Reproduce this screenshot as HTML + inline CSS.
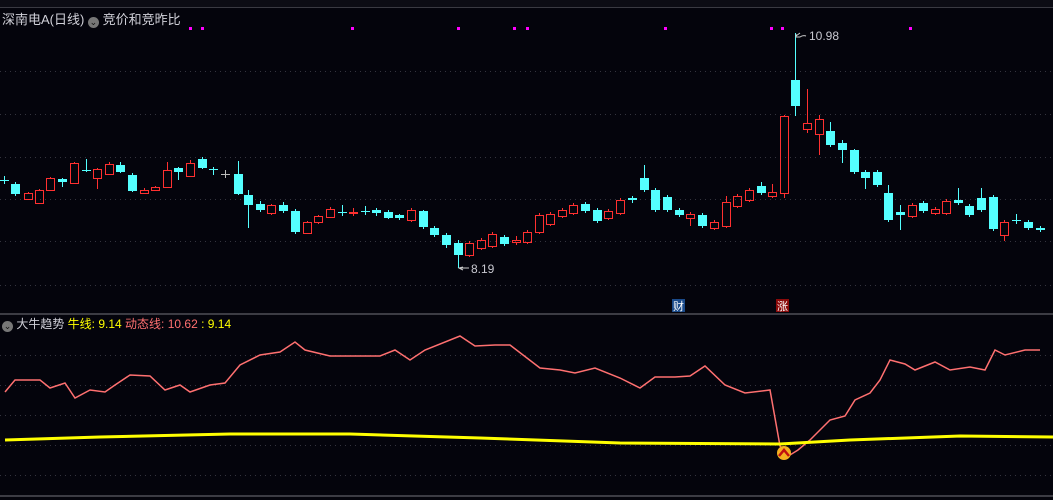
<!DOCTYPE html>
<html><head><meta charset="utf-8"><style>
html,body{margin:0;padding:0;background:#04040c;width:1053px;height:500px;overflow:hidden;font-family:"Liberation Sans","Noto Sans CJK SC",sans-serif;}
.t{position:absolute;font-size:13px;white-space:nowrap}
</style></head><body>
<svg id="s" width="1053" height="500" style="position:absolute;left:0;top:0" xmlns="http://www.w3.org/2000/svg" shape-rendering="crispEdges">
<rect width="1053" height="500" fill="#04040c"/>
<rect x="0" y="0" width="1053" height="7" fill="#0c0c14"/>
<line x1="0" y1="7.5" x2="1053" y2="7.5" stroke="#3a3a42"/>
<g stroke="#34343e" stroke-dasharray="1,4">
<line x1="0" y1="71.5" x2="1053" y2="71.5"/><line x1="0" y1="114.5" x2="1053" y2="114.5"/>
<line x1="0" y1="157.5" x2="1053" y2="157.5"/><line x1="0" y1="199.5" x2="1053" y2="199.5"/>
<line x1="0" y1="241.5" x2="1053" y2="241.5"/><line x1="0" y1="285.5" x2="1053" y2="285.5"/>
<line x1="0" y1="355.5" x2="1053" y2="355.5"/><line x1="0" y1="385.5" x2="1053" y2="385.5"/>
<line x1="0" y1="415.5" x2="1053" y2="415.5"/><line x1="0" y1="445.5" x2="1053" y2="445.5"/>
<line x1="0" y1="475.5" x2="1053" y2="475.5"/>
</g>
<line x1="0" y1="314" x2="1053" y2="314" stroke="#3c3c44" stroke-width="2"/>
<line x1="0" y1="496" x2="1053" y2="496" stroke="#3c3c44" stroke-width="2"/>
<g id="c"></g>
<g fill="#ff00ff"><rect x="189" y="27" width="3" height="3"/><rect x="201" y="27" width="3" height="3"/><rect x="351" y="27" width="3" height="3"/><rect x="457" y="27" width="3" height="3"/><rect x="513" y="27" width="3" height="3"/><rect x="526" y="27" width="3" height="3"/><rect x="664" y="27" width="3" height="3"/><rect x="770" y="27" width="3" height="3"/><rect x="781" y="27" width="3" height="3"/><rect x="909" y="27" width="3" height="3"/></g>
<g shape-rendering="auto">
<path d="M796 36 L800 33 M796 34 L796 37 L800 37 Q803 35 806 36" stroke="#ccc" fill="none"/>
<text x="809" y="40" fill="#c8c8d0" font-size="12" font-family="Liberation Sans">10.98</text>
<path d="M463 267 L459 268 L463 270 M459 268 L469 268" stroke="#ccc" fill="none"/>
<text x="471" y="273" fill="#c8c8d0" font-size="12" font-family="Liberation Sans">8.19</text>
<rect x="672" y="299" width="13" height="13" fill="#1a4a8a"/><text x="673" y="310" fill="#fff" font-size="11" font-family="Noto Sans CJK SC">财</text>
<rect x="776" y="299" width="13" height="13" fill="#8a0a0a"/><text x="777" y="310" fill="#fff" font-size="11" font-family="Noto Sans CJK SC">涨</text>
<polyline fill="none" stroke="#ff7070" stroke-width="1.5" points="5,392 15,380 40,380 50,388 65,383 75,398 90,390 105,392 115,385 130,375 150,376 165,390 180,385 190,392 210,385 225,383 240,365 260,355 280,352 295,342 305,350 330,356 380,356 395,350 410,360 425,350 460,336 475,346 495,345 510,345 540,368 560,370 575,373 595,368 620,378 640,388 655,377 675,377 690,376 705,366 725,385 745,393 770,390 780,446 790,455 798,450 810,440 830,420 845,416 855,400 870,393 880,380 890,360 905,364 915,370 935,362 950,370 970,367 985,370 995,350 1005,355 1025,350 1040,350"/>
<polyline fill="none" stroke="#ffff00" stroke-width="3" points="5,440 100,437 230,434 350,434 480,438 620,443 780,444 850,440 960,436 1053,437"/>
<circle cx="784" cy="453" r="7" fill="#f5b020"/><path d="M779 456 L784 450 L789 456" stroke="#c01010" stroke-width="2.5" fill="none"/>
</g>
</svg>
<div class="t" style="left:2px;top:9px;color:#d0d0d8">深南电A(日线) <span style="display:inline-block;width:11px;height:11px;border-radius:6px;background:#777;vertical-align:-1px;color:#111;font-size:9px;text-align:center;line-height:11px">⌄</span> 竞价和竞昨比</div>
<div class="t" style="left:2px;top:315px;color:#d0d0d8;font-size:12px"><span style="display:inline-block;width:11px;height:11px;border-radius:6px;background:#777;vertical-align:-1px;color:#111;font-size:9px;text-align:center;line-height:11px">⌄</span> 大牛趋势 <span style="color:#ffff00">牛线: 9.14</span> <span style="color:#ff7070">动态线: 10.62</span> <span style="color:#ffff00">: 9.14</span></div>
<script>
var d=[[4,'c',180,181,176,184],[15,'c',184,194,182,196],[28,'r',193,199,192,200],[39,'r',190,203,189,204],[50,'r',178,190,177,191],[62,'c',179,182,178,187],[74,'r',163,183,162,184],[86,'c',170,171,159,172],[97,'r',169,178,168,189],[109,'r',164,174,162,175],[120,'c',165,172,162,173],[132,'c',175,191,173,192],[144,'r',190,193,188,194],[155,'r',187,190,186,191],[167,'r',170,187,162,188],[178,'c',168,172,167,180],[190,'r',163,176,160,177],[202,'c',159,168,157,169],[213,'c',169,170,167,175],[225,'g',174,175,170,178],[238,'c',174,194,161,195],[248,'c',195,205,190,228],[260,'c',204,210,201,212],[271,'r',205,213,204,215],[283,'c',205,211,202,213],[295,'c',211,232,209,234],[307,'r',222,233,221,234],[318,'r',216,222,215,224],[330,'r',209,217,207,218],[342,'c',212,213,205,216],[353,'r',212,213,208,216],[365,'c',211,212,206,215],[376,'c',210,213,208,216],[388,'c',212,218,210,219],[399,'c',215,218,214,220],[411,'r',210,220,208,222],[423,'c',211,227,210,229],[434,'c',228,235,226,237],[446,'c',235,245,233,248],[458,'c',243,255,240,268],[469,'r',243,255,241,257],[481,'r',240,248,238,250],[492,'r',234,246,232,248],[504,'c',237,244,235,246],[516,'r',240,242,236,245],[527,'r',232,242,230,244],[539,'r',215,232,213,234],[550,'r',214,224,212,226],[562,'r',210,216,208,218],[573,'r',205,213,203,215],[585,'c',204,211,202,213],[597,'c',210,221,208,223],[608,'r',211,218,209,220],[620,'r',200,213,198,215],[632,'c',198,200,196,203],[644,'c',178,190,165,192],[655,'c',190,210,188,212],[667,'c',197,210,195,212],[679,'c',210,215,208,217],[690,'r',214,218,212,226],[702,'c',215,226,213,228],[714,'r',222,228,220,230],[726,'r',202,226,196,228],[737,'r',196,206,194,208],[749,'r',190,200,188,202],[761,'c',186,193,182,195],[772,'r',192,196,184,198],[784,'r',116,193,115,198],[795,'c',80,106,33,116],[807,'r',123,129,89,133],[819,'r',119,134,115,155],[830,'c',131,145,122,147],[842,'c',143,150,140,163],[854,'c',150,172,149,174],[865,'c',172,178,170,189],[877,'c',172,185,170,187],[888,'c',193,220,185,222],[900,'c',212,215,205,230],[912,'r',205,216,203,218],[923,'c',203,211,201,213],[935,'r',209,213,207,215],[946,'r',201,213,199,215],[958,'c',200,203,188,205],[969,'c',206,215,204,217],[981,'c',198,210,188,212],[993,'c',197,229,195,231],[1004,'r',222,235,220,241],[1016,'c',220,221,214,224],[1028,'c',222,228,220,230],[1040,'c',228,230,226,232]];
var h='';d.forEach(function(a){var x=a[0],col=a[1]=='r'?'#ff3030':a[1]=='g'?'#bbbbbb':'#54ffff';
var t=a[2],b=Math.max(a[3],a[2]+1);
if(a[1]=='r'){
h+='<rect x="'+x+'" y="'+a[4]+'" width="1" height="'+(t-a[4])+'" fill="'+col+'"/>';
h+='<rect x="'+x+'" y="'+b+'" width="1" height="'+(a[5]-b)+'" fill="'+col+'"/>';
h+='<rect x="'+(x-4)+'" y="'+t+'" width="9" height="1" fill="'+col+'"/>';
h+='<rect x="'+(x-4)+'" y="'+b+'" width="9" height="1" fill="'+col+'"/>';
h+='<rect x="'+(x-4)+'" y="'+t+'" width="1" height="'+(b-t+1)+'" fill="'+col+'"/>';
h+='<rect x="'+(x+4)+'" y="'+t+'" width="1" height="'+(b-t+1)+'" fill="'+col+'"/>';
}else{
h+='<rect x="'+x+'" y="'+a[4]+'" width="1" height="'+(a[5]-a[4])+'" fill="'+col+'"/>';
h+='<rect x="'+(x-4)+'" y="'+t+'" width="9" height="'+(b-t)+'" fill="'+col+'"/>';}});
document.getElementById('c').innerHTML=h;
</script>
</body></html>
